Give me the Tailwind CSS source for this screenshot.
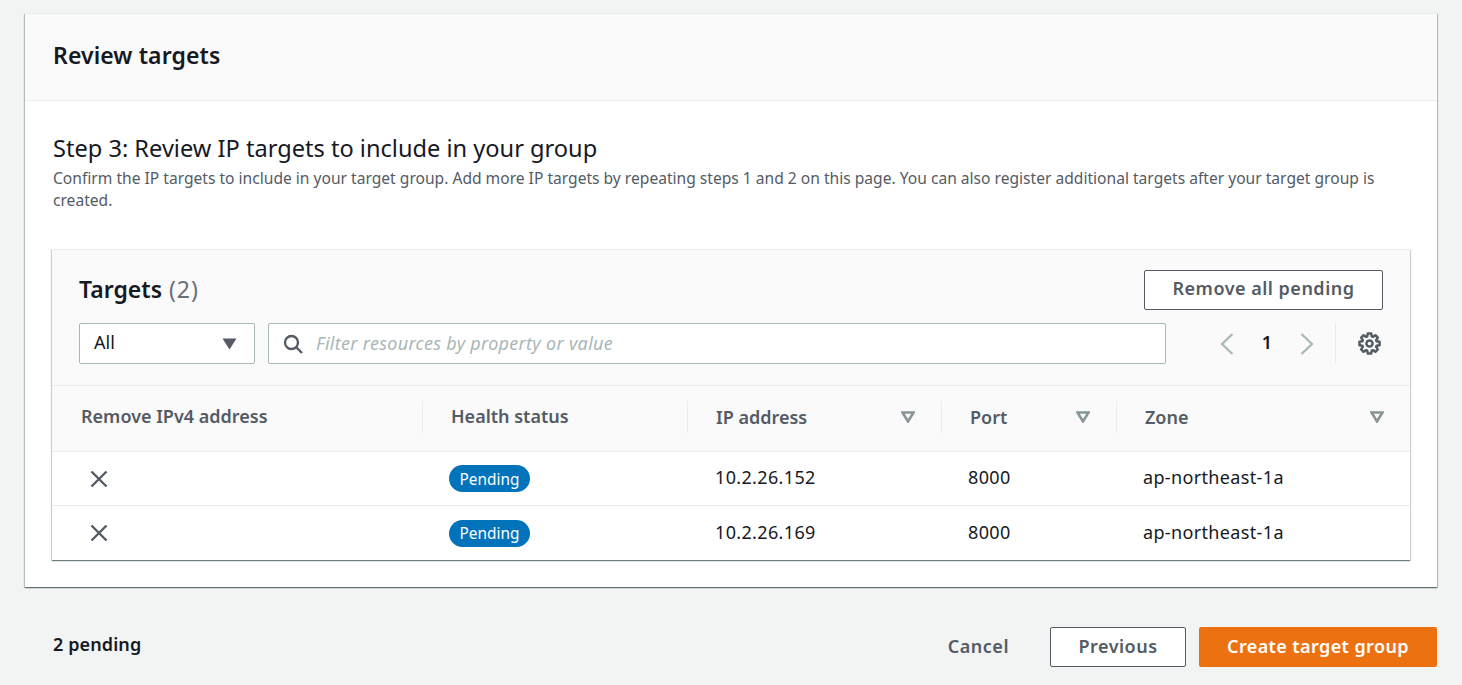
<!DOCTYPE html>
<html lang="en">
<head>
<meta charset="UTF-8">
<title>Review targets</title>
<script src="https://cdn.jsdelivr.net/npm/@tailwindcss/browser@4"></script>
</head>
<body class="bg-[#f2f3f3] font-['Noto_Sans',sans-serif] text-[#16191f] h-[685px] overflow-hidden">
<div class="px-[25px] pt-[13px]">
  <!-- review card -->
  <section class="h-[574px] bg-white shadow-[0_1px_1px_0_rgba(0,28,36,0.4),1px_1px_1px_0_rgba(0,28,36,0.2),-1px_1px_1px_0_rgba(0,28,36,0.2)] border-t border-[#eaeded]">
    <header class="h-[87px] bg-[#fafafa] border-b border-[#eaeded] pl-[28px] flex items-center">
      <h2 class="text-[23px] font-semibold leading-[26px] -mt-[4px] tracking-[0.1px]">Review targets</h2>
    </header>
    <div class="px-[28px] pt-[33px]">
      <h3 class="text-[23.6px] leading-[30px] -mt-[1px]">Step 3: Review IP targets to include in your group</h3>
      <p class="text-[15.6px] leading-[22px] text-[#545b64] mt-[4px]">Confirm the IP targets to include in your target group. Add more IP targets by repeating steps 1 and 2 on this page. You can also register additional targets after your target group is created.</p>

      <!-- targets table -->
      <div class="mt-[38px] -ml-[1px] h-[311px] w-[1358px] bg-white shadow-[0_1px_1px_0_rgba(0,28,36,0.4),1px_1px_1px_0_rgba(0,28,36,0.15),-1px_1px_1px_0_rgba(0,28,36,0.15)] border-t border-[#eaeded]">
        <div class="h-[136px] bg-[#fafafa] border-b border-[#eaeded] pl-[27px] pr-[27px] pt-[20px]">
          <div class="flex items-center justify-between h-[38px]">
            <h4 class="text-[23px] font-semibold leading-[38px]">Targets <span class="font-normal text-[#687078] tracking-[1px] ml-[1px]">(2)</span></h4>
            <button class="w-[239px] h-[40px] mt-[2px] bg-white border border-[#545b64] rounded-[2px] text-[#545b64] text-[18px] font-semibold tracking-[0.5px] leading-[34px] pb-[4px]">Remove all pending</button>
          </div>
          <div class="flex items-center mt-[15px] h-[41px]">
            <div class="w-[176px] h-[41px] bg-white border border-[#aab7b8] rounded-[2px] flex items-center justify-between pl-[14px] pr-[17px]">
              <span class="text-[18px] leading-[37px] -mt-[2px]">All</span>
              <svg width="15" height="12" viewBox="0 0 15 12"><path d="M0.5 0.5h14L7.5 11.5z" fill="#545b64"/></svg>
            </div>
            <div class="w-[898px] h-[41px] ml-[13px] bg-white border border-[#aab7b8] rounded-[2px] flex items-center pl-[14px]">
              <svg width="20" height="20" viewBox="0 0 20 20" fill="none" stroke="#545b64" stroke-width="2.4"><circle cx="8.5" cy="8.5" r="6.5"/><path d="M13 13l6 6"/></svg>
              <span class="ml-[13px] text-[18px] italic text-[#aab7b8] tracking-[0.3px]">Filter resources by property or value</span>
            </div>
            <div class="flex-1 flex items-center h-[41px]">
              <svg class="ml-[54px]" width="14" height="22" viewBox="0 0 14 22" fill="none" stroke="#aab7b8" stroke-width="2.2"><path d="M12.5 1L2 11l10.5 10"/></svg>
              <span class="ml-[27px] w-[12px] text-center text-[18px] font-semibold -mt-[2px]">1</span>
              <svg class="ml-[27px]" width="14" height="22" viewBox="0 0 14 22" fill="none" stroke="#aab7b8" stroke-width="2.2"><path d="M1.5 1L12 11 1.5 21"/></svg>
              <div class="ml-[21px] w-px h-[41px] bg-[#eaeded]"></div>
              <svg class="ml-[22px]" width="23" height="23" viewBox="-12 -12 24 24" fill="none" stroke="#545b64" stroke-width="2.6" stroke-linejoin="round"><circle r="3.2"/><polygon points="-1.8,-10.5 1.8,-10.5 2.4,-7.4 3.54,-6.93 6.15,-8.7 8.7,-6.15 6.93,-3.54 7.4,-2.4 10.5,-1.8 10.5,1.8 7.4,2.4 6.93,3.54 8.7,6.15 6.15,8.7 3.54,6.93 2.4,7.4 1.8,10.5 -1.8,10.5 -2.4,7.4 -3.54,6.93 -6.15,8.7 -8.7,6.15 -6.93,3.54 -7.4,2.4 -10.5,1.8 -10.5,-1.8 -7.4,-2.4 -6.93,-3.54 -8.7,-6.15 -6.15,-8.7 -3.54,-6.93 -2.4,-7.4"/></svg>
            </div>
          </div>
        </div>

        <div class="grid grid-cols-[370px_265px_254px_175px_1fr] h-[66px] pb-[3px] bg-[#fafafa] border-b border-[#eaeded] text-[#545b64] text-[18px] font-semibold items-center">
          <div class="pl-[29px] h-[32px] leading-[30px]">Remove IPv4 address</div>
          <div class="pl-[28px] h-[32px] leading-[30px] border-l border-[#eaeded]">Health status</div>
          <div class="pl-[28px] pr-[26px] h-[32px] leading-[30px] border-l border-[#eaeded] flex items-center justify-between">IP address<svg width="14" height="12" viewBox="0 0 14 12" fill="none" stroke="#879596" stroke-width="2.6"><path d="M1.5 1.5h11L7 10.5z"/></svg></div>
          <div class="pl-[28px] pr-[26px] h-[32px] leading-[30px] border-l border-[#eaeded] flex items-center justify-between">Port<svg width="14" height="12" viewBox="0 0 14 12" fill="none" stroke="#879596" stroke-width="2.6"><path d="M1.5 1.5h11L7 10.5z"/></svg></div>
          <div class="pl-[28px] pr-[26px] h-[32px] leading-[30px] border-l border-[#eaeded] flex items-center justify-between">Zone<svg width="14" height="12" viewBox="0 0 14 12" fill="none" stroke="#879596" stroke-width="2.6"><path d="M1.5 1.5h11L7 10.5z"/></svg></div>
        </div>

        <div class="grid grid-cols-[370px_265px_254px_175px_1fr] h-[54px] border-b border-[#eaeded] items-center text-[18px] tracking-[0.35px]">
          <div class="pl-[38px]"><svg class="block" width="18" height="18" viewBox="0 0 18 18" stroke="#545b64" stroke-width="2.4" fill="none"><path d="M1.5 1.5l15 15M16.5 1.5l-15 15"/></svg></div>
          <div class="pl-[27px]"><span class="inline-flex items-center justify-center w-[81px] h-[27px] pt-[1px] rounded-full bg-[#0073bb] text-white text-[15.4px] tracking-normal">Pending</span></div>
          <div class="pl-[28px] -mt-[2px]">10.2.26.152</div>
          <div class="pl-[27px] -mt-[2px]">8000</div>
          <div class="pl-[27px] -mt-[2px]">ap-northeast-1a</div>
        </div>
        <div class="grid grid-cols-[370px_265px_254px_175px_1fr] h-[54px] items-center text-[18px] tracking-[0.35px]">
          <div class="pl-[38px]"><svg class="block" width="18" height="18" viewBox="0 0 18 18" stroke="#545b64" stroke-width="2.4" fill="none"><path d="M1.5 1.5l15 15M16.5 1.5l-15 15"/></svg></div>
          <div class="pl-[27px]"><span class="inline-flex items-center justify-center w-[81px] h-[27px] pt-[1px] rounded-full bg-[#0073bb] text-white text-[15.4px] tracking-normal">Pending</span></div>
          <div class="pl-[28px] -mt-[2px]">10.2.26.169</div>
          <div class="pl-[27px] -mt-[2px]">8000</div>
          <div class="pl-[27px] -mt-[2px]">ap-northeast-1a</div>
        </div>
      </div>
    </div>
  </section>

  <!-- footer actions -->
  <footer class="flex items-center mt-[39px] h-[41px] pl-[28px]">
    <span class="text-[18px] font-semibold -mt-[4px] tracking-[0.1px]">2 pending</span>
    <button class="ml-auto text-[#545b64] text-[18px] font-semibold tracking-[0.5px]">Cancel</button>
    <button class="ml-[41px] w-[136px] h-[40px] bg-white border border-[#545b64] rounded-[2px] text-[#545b64] text-[18px] font-semibold tracking-[0.5px]">Previous</button>
    <button class="ml-[13px] w-[238px] h-[40px] bg-[#ec7211] rounded-[2px] text-white text-[18px] font-semibold tracking-[0.4px]">Create target group</button>
  </footer>
</div>
</body>
</html>
